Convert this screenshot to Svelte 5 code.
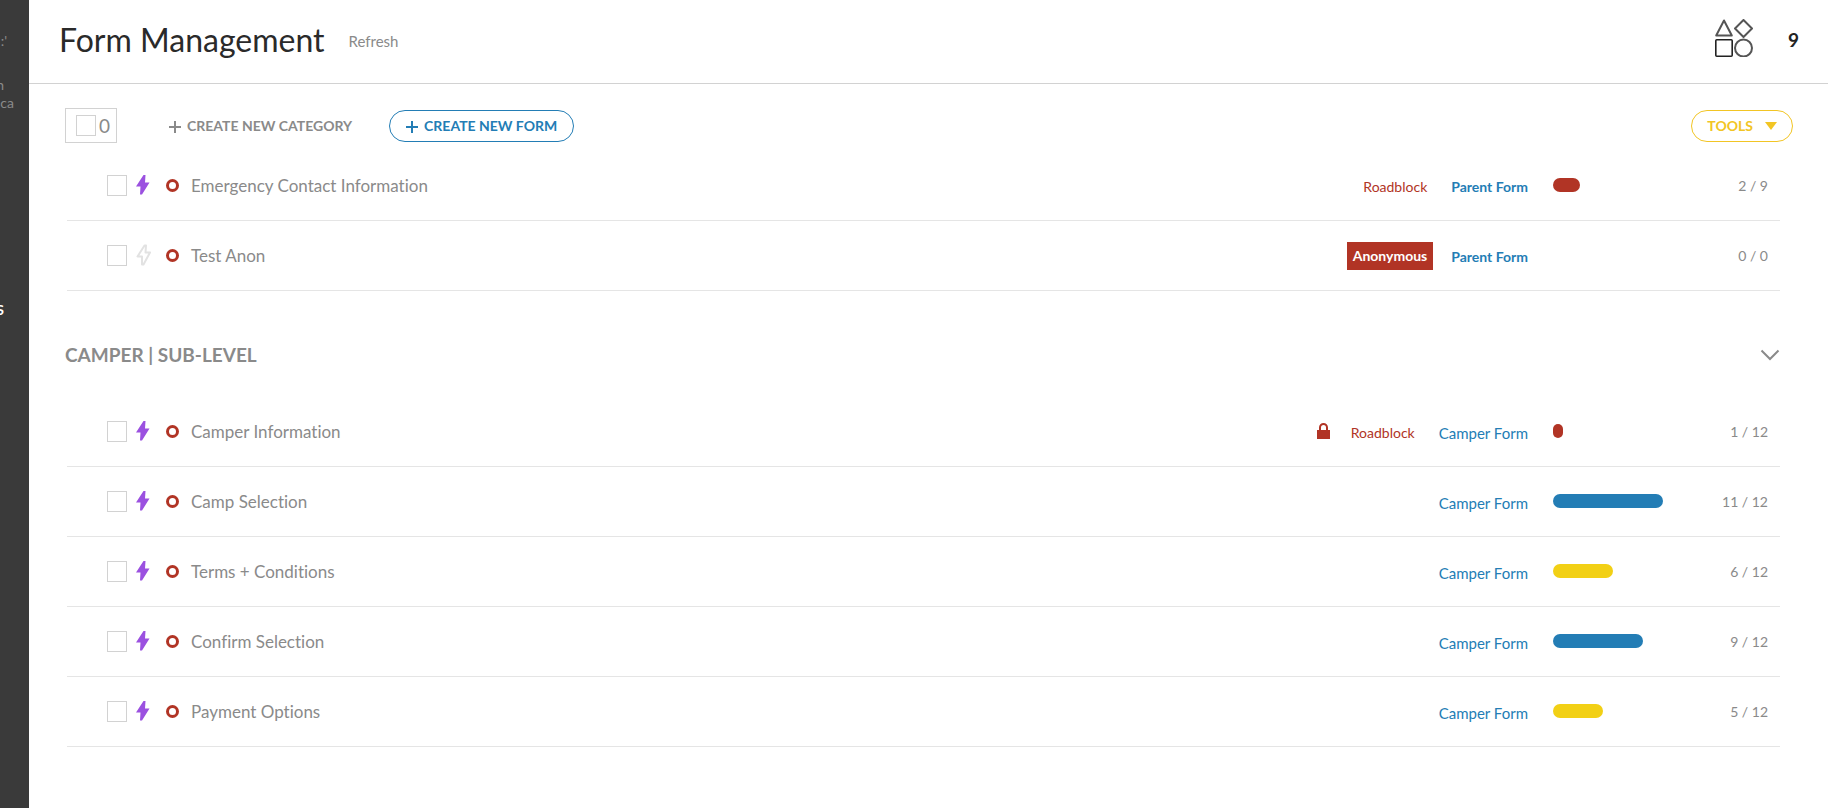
<script lang="ts">
	interface Form {
		name: string;
		instant: boolean;
		level: string;
		strong?: boolean;
		locked?: boolean;
		roadblock?: boolean;
		anonymous?: boolean;
		done: number;
		total: number;
	}

	interface Category {
		title: string;
		forms: Form[];
	}

	const categories: Category[] = [
		{
			title: '',
			forms: [
				{ name: 'Emergency Contact Information', instant: true, level: 'Parent Form', strong: true, roadblock: true, done: 2, total: 9 },
				{ name: 'Test Anon', instant: false, level: 'Parent Form', strong: true, anonymous: true, done: 0, total: 0 }
			]
		},
		{
			title: 'CAMPER | SUB-LEVEL',
			forms: [
				{ name: 'Camper Information', instant: true, level: 'Camper Form', locked: true, roadblock: true, done: 1, total: 12 },
				{ name: 'Camp Selection', instant: true, level: 'Camper Form', done: 11, total: 12 },
				{ name: 'Terms + Conditions', instant: true, level: 'Camper Form', done: 6, total: 12 },
				{ name: 'Confirm Selection', instant: true, level: 'Camper Form', done: 9, total: 12 },
				{ name: 'Payment Options', instant: true, level: 'Camper Form', done: 5, total: 12 }
			]
		}
	];

	let collapsed = $state(false);
	let selected: string[] = $state([]);

	function percent(form: Form) {
		return form.total ? (form.done / form.total) * 100 : 0;
	}

	function tone(form: Form) {
		const p = percent(form);
		if (p < 33) return 'low';
		return p < 67 ? 'mid' : 'high';
	}
</script>

<div class="app">
	<nav class="sidebar" aria-label="Main">
		<span class="sidebar__line sidebar__line--user">:'</span>
		<span class="sidebar__line sidebar__line--clipped">n</span>
		<span class="sidebar__line">ca</span>
		<a class="sidebar__link" href="#forms">S</a>
	</nav>

	<div class="page">
		<header class="header">
			<h1 class="header__title">Form Management</h1>
			<button type="button" class="header__refresh">Refresh</button>
			<svg class="header__shapes" viewBox="0 0 38 38" aria-hidden="true">
				<path d="M9 1.500 16.800 16.500H1.200Z" />
				<path d="M28.500 1 37 9.500 28.500 18 20 9.500Z" />
				<rect class="header__square" x="0.800" y="20.800" width="16.400" height="16.400" rx="1" />
				<circle cx="28.500" cy="29" r="8.500" />
			</svg>
			<span class="header__count">9</span>
		</header>

		<main class="content">
			<div class="toolbar">
				<label class="select-all">
					<input type="checkbox" class="check" aria-label="Select all" />
					<span>{selected.length}</span>
				</label>
				<button type="button" class="btn btn--plain">
					<svg class="plus" viewBox="0 0 12 12" aria-hidden="true"><path d="M6 0V12M0 6H12" /></svg>
					CREATE NEW CATEGORY
				</button>
				<button type="button" class="btn btn--outline">
					<svg class="plus" viewBox="0 0 12 12" aria-hidden="true"><path d="M6 0V12M0 6H12" /></svg>
					CREATE NEW FORM
				</button>
				<button type="button" class="btn btn--tools">
					TOOLS
					<svg class="caret" viewBox="0 0 12 8" aria-hidden="true"><path d="M0 0H12L6 8Z" /></svg>
				</button>
			</div>

			{#each categories as category}
				{#if category.title}
					<div class="category">
						<h2 class="category__title">{category.title}</h2>
						<button
							type="button"
							class="category__toggle"
							aria-label="Toggle category"
							aria-expanded={!collapsed}
							onclick={() => (collapsed = !collapsed)}
						>
							<svg viewBox="0 0 20 12" aria-hidden="true"><path d="M1.500 1.500 10 10 18.500 1.500" /></svg>
						</button>
					</div>
				{/if}
				{#if !category.title || !collapsed}
					<ul class="forms">
						{#each category.forms as form}
							<li class="form">
								<input
									type="checkbox"
									class="check"
									aria-label={form.name}
									value={form.name}
									bind:group={selected}
								/>
								<svg class="bolt" class:bolt--off={!form.instant} viewBox="0 0 16 22" aria-hidden="true">
									{#if form.instant}
										<path d="M8.500 1 1 12.500H5.500L5 20.500H7L14.500 8.500H10L10.500 1Z" />
									{:else}
										<path d="M9.500 1.500 2.500 12.500H7V20.500H8.500L15 8.500H10.500L11 1.500Z" />
									{/if}
								</svg>
								<span class="ring"></span>
								<span class="form__name">{form.name}</span>
								{#if form.locked}
									<svg class="lock" viewBox="0 0 13 16" aria-hidden="true">
										<path class="lock__shackle" d="M3 8V4.500a3.500 3.500 0 0 1 7 0V8" />
										<path d="M0 7H13V16H0Z" />
									</svg>
								{/if}
								{#if form.roadblock}
									<span class="tag tag--roadblock">Roadblock</span>
								{/if}
								{#if form.anonymous}
									<span class="tag tag--anonymous">Anonymous</span>
								{/if}
								<a class="form__level" class:form__level--strong={form.strong} href="#level">{form.level}</a>
								<span class="meter">
									<span class="meter__bar meter__bar--{tone(form)}" style="width: {percent(form)}%"></span>
								</span>
								<span class="form__count">{form.done} / {form.total}</span>
							</li>
						{/each}
					</ul>
				{/if}
			{/each}
		</main>
	</div>
</div>

<style>
	:global(body) {
		background: #fff;
	}

	.app {
		display: flex;
		min-height: 100vh;
		font-family: Lato, sans-serif;
		font-size: 14px;
		font-variant-ligatures: none;
		line-height: 18px;
		color: #8a8a8a;
	}

	button {
		padding: 0;
		border: none;
		background: none;
		font: inherit;
		color: inherit;
		cursor: pointer;
	}

	a {
		text-decoration: none;
	}

	.sidebar {
		flex: none;
		display: flex;
		flex-direction: column;
		align-items: flex-start;
		box-sizing: border-box;
		width: 29px;
		padding-top: 32px;
		overflow: hidden;
		background: #3a3a3a;
	}

	.sidebar__line {
		width: 14px;
		text-align: right;
	}

	.sidebar__line--user {
		width: 7px;
		margin-bottom: 26px;
	}

	.sidebar__line--clipped {
		margin-left: -10px;
	}

	.sidebar__link {
		width: 14px;
		margin-top: 189px;
		margin-left: -10px;
		font-weight: 700;
		text-align: right;
		color: #fff;
	}

	.page {
		flex: 1;
		min-width: 0;
	}

	.header {
		display: flex;
		align-items: center;
		box-sizing: border-box;
		height: 84px;
		padding: 0 29px 4px 30px;
		border-bottom: 1px solid #d2d2d2;
	}

	.header__title {
		margin: 0 24px 0 0;
		font-size: 32px;
		font-weight: 400;
		line-height: 40px;
		color: #2a2a2a;
	}

	.header__refresh {
		padding-top: 2px;
		font-size: 15px;
	}

	.header__shapes {
		width: 38px;
		height: 38px;
		margin-bottom: 4px;
		margin-left: auto;
		fill: none;
		stroke: #555;
		stroke-width: 2;
		stroke-linejoin: round;
	}

	.header__square {
		stroke: #222;
		stroke-width: 1.6;
	}

	.header__count {
		width: 46px;
		font-size: 19px;
		font-weight: 700;
		text-align: right;
		color: #222;
	}

	.content {
		padding: 24px 48px 0 36px;
	}

	.toolbar {
		display: flex;
		align-items: center;
		margin-right: -13px;
		margin-bottom: 8px;
	}

	.check {
		appearance: none;
		flex: none;
		box-sizing: border-box;
		width: 20px;
		height: 21px;
		margin: 0;
		border: 1px solid #d2d2d2;
		background: #fff;
	}

	.check:checked {
		background: #237db5;
	}

	.select-all {
		display: flex;
		align-items: center;
		gap: 3px;
		box-sizing: border-box;
		width: 52px;
		height: 35px;
		margin-right: 52px;
		padding-left: 10px;
		border: 1px solid #d2d2d2;
		font-size: 19px;
	}

	.btn {
		display: flex;
		align-items: center;
		gap: 6px;
		box-sizing: border-box;
		height: 32px;
		font-weight: 700;
		white-space: nowrap;
	}

	.btn--plain {
		margin-right: 37px;
	}

	.btn--outline {
		padding: 0 16px;
		border: 1px solid #237db5;
		border-radius: 16px;
		color: #237db5;
	}

	.btn--tools {
		gap: 12px;
		margin-left: auto;
		padding: 0 15px;
		border: 1px solid #f2c524;
		border-radius: 16px;
		color: #f2c524;
	}

	.plus {
		width: 12px;
		height: 12px;
		margin-top: 2px;
		stroke: currentColor;
		stroke-width: 2;
	}

	.caret {
		width: 12px;
		height: 8px;
		fill: currentColor;
	}

	.category {
		display: flex;
		align-items: center;
		justify-content: space-between;
		margin: 50px 0 28px;
	}

	.category__title {
		margin: 0;
		font-size: 19px;
		font-weight: 700;
		line-height: 28px;
	}

	.category__toggle svg {
		display: block;
		width: 20px;
		height: 12px;
		fill: none;
		stroke: #8a8a8a;
		stroke-width: 2;
	}

	.forms {
		margin: 0 0 0 2px;
		padding: 0;
		list-style: none;
	}

	.form {
		display: flex;
		align-items: center;
		box-sizing: border-box;
		height: 70px;
		padding: 0 12px 0 40px;
		border-bottom: 1px solid #e5e5e5;
	}

	.bolt {
		width: 16px;
		height: 22px;
		margin: 0 15px 2px 8px;
		fill: #9b51e0;
	}

	.bolt--off {
		fill: none;
		stroke: #e2e2e2;
		stroke-width: 2;
		stroke-linejoin: round;
	}

	.ring {
		box-sizing: border-box;
		width: 13px;
		height: 13px;
		margin-right: 12px;
		border: 3px solid #b13425;
		border-radius: 50%;
	}

	.form__name {
		flex: 1;
		font-size: 17px;
	}

	.lock {
		width: 13px;
		height: 16px;
		margin-right: 21px;
		margin-bottom: 2px;
		fill: #b13425;
	}

	.lock__shackle {
		fill: none;
		stroke: #b13425;
		stroke-width: 2;
	}

	.tag {
		margin-right: 24px;
		padding-top: 2px;
		color: #b13425;
	}

	.tag--anonymous {
		margin-right: 18px;
		padding: 5px 6px;
		background: #b13425;
		font-weight: 700;
		color: #fff;
	}

	.form__level {
		padding-top: 2px;
		font-size: 15px;
		color: #237db5;
	}

	.form__level--strong {
		font-size: 14px;
		font-weight: 700;
	}

	.meter {
		width: 120px;
		margin-bottom: 2px;
		margin-left: 25px;
	}

	.meter__bar {
		display: block;
		height: 14px;
		border-radius: 7px;
	}

	.meter__bar--low {
		background: #b13425;
	}

	.meter__bar--mid {
		background: #f2d015;
	}

	.meter__bar--high {
		background: #237db5;
	}

	.form__count {
		width: 95px;
		text-align: right;
	}
</style>
